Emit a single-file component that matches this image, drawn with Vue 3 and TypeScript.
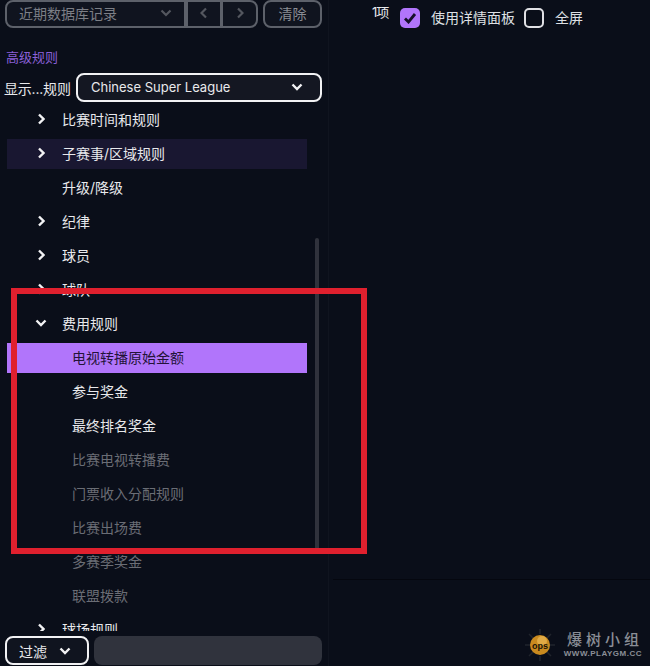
<script setup lang="ts">
type Row = {
  label: string
  arrow?: 'right' | 'down'
  sub?: boolean
  state?: 'hover' | 'active' | 'muted'
}

const rows: Row[] = [
  { label: '比赛时间和规则', arrow: 'right' },
  { label: '子赛事/区域规则', arrow: 'right', state: 'hover' },
  { label: '升级/降级' },
  { label: '纪律', arrow: 'right' },
  { label: '球员', arrow: 'right' },
  { label: '球队', arrow: 'right' },
  { label: '费用规则', arrow: 'down' },
  { label: '电视转播原始金额', sub: true, state: 'active' },
  { label: '参与奖金', sub: true },
  { label: '最终排名奖金', sub: true },
  { label: '比赛电视转播费', sub: true, state: 'muted' },
  { label: '门票收入分配规则', sub: true, state: 'muted' },
  { label: '比赛出场费', sub: true, state: 'muted' },
  { label: '多赛季奖金', sub: true, state: 'muted' },
  { label: '联盟拨款', sub: true, state: 'muted' },
  { label: '球场规则', arrow: 'right' },
]
</script>

<template>
  <div class="page">
    <aside class="side">
      <div class="topbar">
        <div class="history">
          <div class="history-select">
            <span>近期数据库记录</span>
            <svg class="chev" width="12" height="8" viewBox="0 0 12 8"><path d="M1.5 1.5 6 6l4.500-4.500" /></svg>
          </div>
          <div class="history-btn">
            <svg class="chev" width="8" height="12" viewBox="0 0 8 12"><path d="M6 1.500 1.500 6 6 10.500" /></svg>
          </div>
          <div class="history-btn">
            <svg class="chev" width="8" height="12" viewBox="0 0 8 12"><path d="M2 1.500 6.500 6 2 10.500" /></svg>
          </div>
        </div>
        <div class="clear"><span>清除</span></div>
      </div>

      <div class="heading">高级规则</div>

      <div class="show-row">
        <span class="show-label">显示...规则</span>
        <div class="league">
          <span>Chinese Super League</span>
          <svg class="chev white" width="12" height="8" viewBox="0 0 12 8"><path d="M1.500 1.500 6 6l4.500-4.500" /></svg>
        </div>
      </div>

      <div class="tree">
        <div v-for="row in rows" :key="row.label" class="row" :class="[row.state, { sub: row.sub }]">
          <svg v-if="row.arrow === 'right'" class="arrow" width="8" height="12" viewBox="0 0 8 12"><path d="M2 1.500 6.500 6 2 10.500" /></svg>
          <svg v-else-if="row.arrow === 'down'" class="arrow down" width="12" height="8" viewBox="0 0 12 8"><path d="M1.500 1.500 6 6l4.500-4.500" /></svg>
          <span>{{ row.label }}</span>
        </div>
      </div>
      <div class="scrollbar"></div>

      <div class="filter-row">
        <div class="filter">
          <span>过滤</span>
          <svg class="chev white" width="12" height="8" viewBox="0 0 12 8"><path d="M1.500 1.500 6 6l4.500-4.500" /></svg>
        </div>
        <div class="filter-input"></div>
      </div>
    </aside>

    <main class="content">
      <div class="options">
        <span class="count">1项</span>
        <span class="box checked">
          <svg width="14" height="12" viewBox="0 0 14 12"><path d="M2 6.500 5.500 10 12 2" /></svg>
        </span>
        <span class="opt">使用详情面板</span>
        <span class="box"></span>
        <span class="opt">全屏</span>
      </div>
      <div class="foot">
        <div class="mark">
          <svg class="logo" width="36" height="36" viewBox="0 0 36 36">
            <g stroke="#20242c" stroke-width="1.500">
              <path d="M18 2v5M18 29v5M3 18h5M28 18h5M7 7l4 4M29 7l-4 4M7 29l4-4M29 29l-4-4" />
            </g>
            <circle cx="18" cy="18" r="10" fill="#c98a1f" />
            <circle cx="20" cy="14" r="5" fill="#e0aa45" />
            <text x="18" y="22" class="logo-text">ops</text>
          </svg>
          <div class="mark-text">
            <div class="mark-cn">爆树小组</div>
            <div class="mark-url">WWW.PLAYGM.CC</div>
          </div>
        </div>
      </div>
    </main>

    <div class="annotation"></div>
  </div>
</template>

<style>
html,
body {
  margin: 0;
  background: #0a0e19;
}
</style>

<style scoped>
.page {
  position: relative;
  display: flex;
  width: 650px;
  height: 666px;
  overflow: hidden;
  background: #0a0e19;
  color: #e8e9ec;
  font-family: "Inter", "Noto Sans CJK SC", sans-serif;
  font-size: 14px;
}

.side {
  position: relative;
  display: flex;
  flex-direction: column;
  width: 329px;
  flex: none;
  border-right: 1px solid #10141f;
  box-sizing: border-box;
}

.chev path,
.arrow path {
  fill: none;
  stroke: #54575f;
  stroke-width: 2.2;
}

.chev.white path,
.arrow path {
  stroke: #f2f2f4;
  stroke-width: 2.400;
}

.topbar {
  display: flex;
  gap: 5px;
  height: 28px;
  padding-left: 5px;
  padding-right: 6px;
}

.history {
  display: flex;
  width: 253px;
  box-sizing: border-box;
  border: 2px solid #5d616a;
  border-radius: 8px;
  background: #10141f;
  color: #7c7f86;
}

.history-select {
  display: flex;
  flex: 1;
  align-items: center;
  justify-content: space-between;
  padding: 0 12px 2px 12px;
  box-sizing: border-box;
}

.history-btn {
  display: flex;
  flex: none;
  align-items: center;
  justify-content: center;
  width: 36px;
  padding-bottom: 2px;
  border-left: 3px solid #5d616a;
  box-sizing: border-box;
}

.history-select + .history-btn {
  border-left-width: 4px;
}

.clear {
  display: flex;
  flex: 1;
  align-items: center;
  justify-content: center;
  box-sizing: border-box;
  padding-bottom: 2px;
  border: 2px solid #5d616a;
  border-radius: 8px;
  background: #10141f;
  color: #8a8d94;
}

.heading {
  margin-top: 21px;
  padding-left: 6px;
  height: 16px;
  line-height: 16px;
  font-size: 13px;
  color: #8a60d8;
}

.show-row {
  display: flex;
  align-items: center;
  gap: 4px;
  margin-top: 8px;
  padding-left: 4px;
  padding-right: 6px;
}

.show-label {
  width: 68px;
  white-space: nowrap;
  font-size: 14px;
  letter-spacing: -0.2px;
}

.league {
  display: flex;
  flex: 1;
  align-items: center;
  justify-content: space-between;
  height: 29px;
  box-sizing: border-box;
  padding: 0 17px 2px 13px;
  border: 2px solid #f2f2f4;
  border-radius: 8px;
  background: #141722;
  font-size: 13px;
}

.tree {
  display: flex;
  flex-direction: column;
  gap: 4px;
  height: 526px;
  margin: 3px 0 0 7px;
  width: 300px;
  overflow: hidden;
}

.row {
  display: flex;
  flex: none;
  align-items: center;
  height: 30px;
  box-sizing: border-box;
  padding-left: 55px;
  padding-bottom: 2px;
  position: relative;
}

.row.sub {
  padding-left: 65px;
}

.row.hover {
  background: #191731;
}

.row.active {
  background: #b175fb;
  color: #231338;
}

.row.muted {
  color: #6a6d75;
}

.arrow {
  position: absolute;
  left: 30px;
}

.arrow.down {
  left: 28px;
}

.scrollbar {
  position: absolute;
  left: 315px;
  top: 238px;
  width: 4px;
  height: 312px;
  background: #30323c;
  border-radius: 2px;
}

.filter-row {
  display: flex;
  gap: 5px;
  height: 29px;
  margin-top: 5px;
  padding-left: 5px;
  padding-right: 6px;
}

.filter {
  display: flex;
  align-items: center;
  justify-content: space-between;
  width: 84px;
  box-sizing: border-box;
  padding: 0 16px 0 12px;
  border: 2px solid #f2f2f4;
  border-radius: 8px;
  background: #10141f;
}

.filter-input {
  flex: 1;
  border-radius: 8px;
  background: #30333d;
}

.content {
  display: flex;
  flex: 1;
  flex-direction: column;
}

.options {
  display: flex;
  align-items: center;
  height: 36px;
  padding-left: 43px;
}

.count {
  width: 28px;
  margin-top: -14px;
  font-size: 13px;
  letter-spacing: -1px;
}

.box {
  display: flex;
  flex: none;
  align-items: center;
  justify-content: center;
  width: 20px;
  height: 20px;
  box-sizing: border-box;
  border: 2px solid #e0e0e4;
  border-radius: 5px;
}

.box.checked {
  border: none;
  background: #b175fb;
}

.box path {
  fill: none;
  stroke: #15102a;
  stroke-width: 2.800;
}

.opt {
  margin-top: -2px;
  margin-left: 11px;
  margin-right: 9px;
  color: #dfe0e4;
}

.foot {
  display: flex;
  flex: 1;
  flex-direction: column;
  justify-content: flex-end;
  margin-top: 543px;
  margin-left: 4px;
  border-top: 1px solid #05070f;
}

.mark {
  display: flex;
  align-items: center;
  justify-content: flex-end;
  gap: 6px;
  padding-right: 8px;
  padding-bottom: 3px;
  transform: translateX(0);
}

.logo {
  margin-right: 0;
}

.logo-text {
  fill: #1a1408;
  font-size: 9px;
  font-weight: 700;
  text-anchor: middle;
  font-family: "Liberation Sans", sans-serif;
}

.mark-text {
  display: flex;
  flex-direction: column;
  align-items: center;
  color: #8b8e97;
}

.mark-cn {
  font-size: 15px;
  line-height: 18px;
  letter-spacing: 4px;
  font-weight: 500;
  margin-right: -4px;
}

.mark-url {
  font-family: "Liberation Sans", sans-serif;
  font-size: 8px;
  line-height: 10px;
  font-weight: 700;
  letter-spacing: 0.5px;
}

.annotation {
  position: absolute;
  left: 11px;
  top: 288px;
  width: 356px;
  height: 266px;
  box-sizing: border-box;
  border: 6px solid #e0202e;
  pointer-events: none;
}
</style>
